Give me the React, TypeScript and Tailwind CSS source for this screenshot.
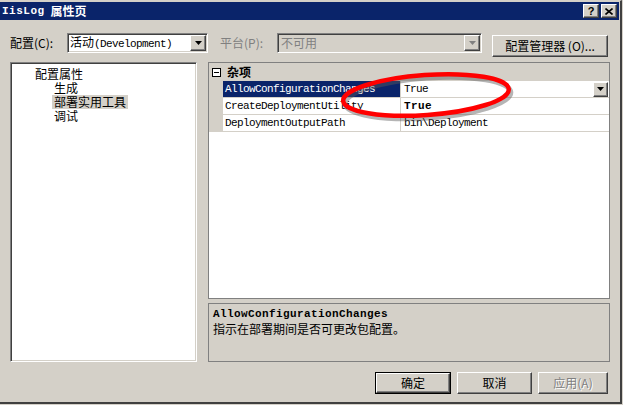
import React from "react";

const CJK = "font-['SimSun','Noto_Sans_CJK_SC',sans-serif]";
const MONO = "font-['Liberation_Mono','Noto_Sans_CJK_SC',monospace]";

const raised =
  "border border-t-white border-l-white border-b-[#404040] border-r-[#404040] shadow-[inset_-1px_-1px_0_#808080,inset_1px_1px_0_#d4d0c8]";
const sunken =
  "border border-t-[#808080] border-l-[#808080] border-b-white border-r-white shadow-[inset_1px_1px_0_#404040,inset_-1px_-1px_0_#d4d0c8]";

function Arrow({ disabled }: { disabled?: boolean }) {
  return (
    <svg width="7" height="4" viewBox="0 0 7 4">
      <path d="M0 0h7L3.5 4z" fill={disabled ? "#808080" : "#000"} />
    </svg>
  );
}

function DropBtn({ disabled, w = 16, h = 16 }: { disabled?: boolean; w?: number; h?: number }) {
  return (
    <div
      className={`${raised} bg-[#d4d0c8] flex items-center justify-center shrink-0`}
      style={{ width: w, height: h }}
    >
      <Arrow disabled={disabled} />
    </div>
  );
}

export default function App() {
  return (
    <div className={`w-[623px] h-[405px] bg-[#d4d0c8] relative overflow-hidden text-[12px] text-black ${CJK}`}>
      <div className="w-[622px] h-[404px] border-t border-t-[#d4d0c8] border-r-2 border-r-[#404040] border-b-2 border-b-[#404040] flex flex-col">
        {/* title bar */}
        <div className="mt-[1px] h-[18px] mr-[1px] bg-[#0a246a] flex items-center justify-between pl-[2px] pr-[2px]">
          <div className="flex items-center text-white font-bold leading-none">
            <span className={`${MONO} text-[11px] tracking-[0.5px]`}>IisLog</span>
            <span className="ml-[6px] text-[12px]">属性页</span>
          </div>
          <div className="flex gap-[2px]">
            <div className={`${raised} bg-[#d4d0c8] w-[16px] h-[14px] flex items-center justify-center text-[11px] font-bold leading-none font-['Liberation_Sans',sans-serif]`}>
              ?
            </div>
            <div className={`${raised} bg-[#d4d0c8] w-[16px] h-[14px] flex items-center justify-center`}>
              <svg width="8" height="7" viewBox="0 0 8 7">
                <path d="M0.5 0.5L7.5 6.5M7.5 0.5L0.5 6.5" stroke="#000" strokeWidth="1.6" />
              </svg>
            </div>
          </div>
        </div>

        {/* config row */}
        <div className="mt-[13px] flex items-start pl-[10px] h-[24px]">
          <div className="w-[57px] h-[20px] flex items-center">配置(C):</div>
          <div className={`${sunken} bg-white w-[141px] h-[20px] flex items-center justify-between pl-[2px] pr-[1px]`}>
            <span className="leading-none">
              活动<span className={`${MONO} text-[11px] tracking-[-0.6px]`}>(Development)</span>
            </span>
            <DropBtn w={16} h={16} />
          </div>
          <div className="ml-[12px] w-[57px] h-[20px] flex items-center text-[#808080]">平台(P):</div>
          <div className={`${sunken} bg-[#d4d0c8] w-[205px] h-[20px] flex items-center justify-between pl-[3px] pr-[1px] text-[#808080]`}>
            <span className="leading-none">不可用</span>
            <DropBtn w={16} h={16} disabled />
          </div>
          <div className={`${raised} ml-[10px] mt-[2px] bg-[#d4d0c8] w-[116px] h-[22px] flex items-center justify-center`}>
            配置管理器 (O)...
          </div>
        </div>

        {/* panels */}
        <div className="mt-[5px] flex pl-[10px] gap-[11px] h-[300px]">
          <div className={`${sunken} bg-white w-[187px] h-[300px] pt-[4px] flex flex-col`}>
            <div className="pl-[24px] h-[14px] flex items-center leading-[12px]">配置属性</div>
            <div className="pl-[43px] h-[14px] flex items-center leading-[12px]">生成</div>
            <div className="pl-[41px] h-[14px] flex items-center leading-[12px]">
              <span className="bg-[#d4d0c8] px-[2px] h-[14px] flex items-center">部署实用工具</span>
            </div>
            <div className="pl-[43px] h-[14px] flex items-center leading-[12px]">调试</div>
          </div>

          <div className="w-[402px] flex flex-col gap-[4px]">
            <div className="h-[237px] border border-[#808080] bg-white flex flex-col">
              <div className="h-[18px] bg-[#d4d0c8] flex items-center pl-[3px] shrink-0">
                <div className="w-[9px] h-[9px] border border-black bg-white flex items-center justify-center">
                  <div className="w-[5px] h-[1px] bg-black" />
                </div>
                <span className="ml-[6px] font-bold">杂项</span>
              </div>
              {[
                { n: "AllowConfigurationChanges", v: "True", sel: true, bold: false },
                { n: "CreateDeploymentUtility", v: "True", sel: false, bold: true },
                { n: "DeploymentOutputPath", v: "bin\\Deployment", sel: false, bold: false },
              ].map((r) => (
                <div key={r.n} className="h-[17px] flex shrink-0">
                  <div className="w-[14px] bg-[#d4d0c8]" />
                  <div
                    className={`w-[178px] border-b border-r border-[#d4d0c8] flex items-center pl-[2px] ${MONO} text-[11px] tracking-[-0.6px] ${
                      r.sel ? "bg-[#0a246a] text-white" : ""
                    }`}
                  >
                    {r.n}
                  </div>
                  <div
                    className={`flex-1 border-b border-[#d4d0c8] flex items-center justify-between pl-[3px] pr-[1px] ${MONO} text-[11px] ${
                      r.bold ? "font-bold tracking-[0.4px]" : "tracking-[-0.6px]"
                    }`}
                  >
                    <span>{r.v}</span>
                    {r.sel && <DropBtn w={15} h={15} />}
                  </div>
                </div>
              ))}
            </div>
            <div className="h-[59px] border border-[#808080] bg-[#d4d0c8] pl-[4px] pt-[3px]">
              <div className={`${MONO} text-[11px] font-bold tracking-[0.4px] leading-[14px]`}>
                AllowConfigurationChanges
              </div>
              <div className="leading-[16px]">指示在部署期间是否可更改包配置。</div>
            </div>
          </div>
        </div>

        {/* buttons */}
        <div className="mt-[10px] flex justify-end pr-[12px] gap-[6px]">
          <div className="w-[76px] h-[22px] border border-black">
            <div className={`${raised} bg-[#d4d0c8] w-full h-full flex items-center justify-center`}>确定</div>
          </div>
          <div className={`${raised} bg-[#d4d0c8] w-[75px] h-[22px] flex items-center justify-center`}>取消</div>
          <div className={`${raised} bg-[#d4d0c8] w-[70px] h-[22px] flex items-center justify-center text-[#808080] [text-shadow:1px_1px_0_#fff]`}>
            应用(A)
          </div>
        </div>
      </div>

      {/* red annotation ellipse */}
      <svg className="absolute left-0 top-0 pointer-events-none" width="623" height="405">
        <ellipse cx="428" cy="98" rx="83" ry="20" transform="rotate(-4 428 98)" fill="none" stroke="rgba(90,90,90,0.45)" strokeWidth="5" />
        <ellipse cx="426" cy="95" rx="83" ry="20" transform="rotate(-4 426 95)" fill="none" stroke="#ff0000" strokeWidth="4.5" />
      </svg>
    </div>
  );
}
